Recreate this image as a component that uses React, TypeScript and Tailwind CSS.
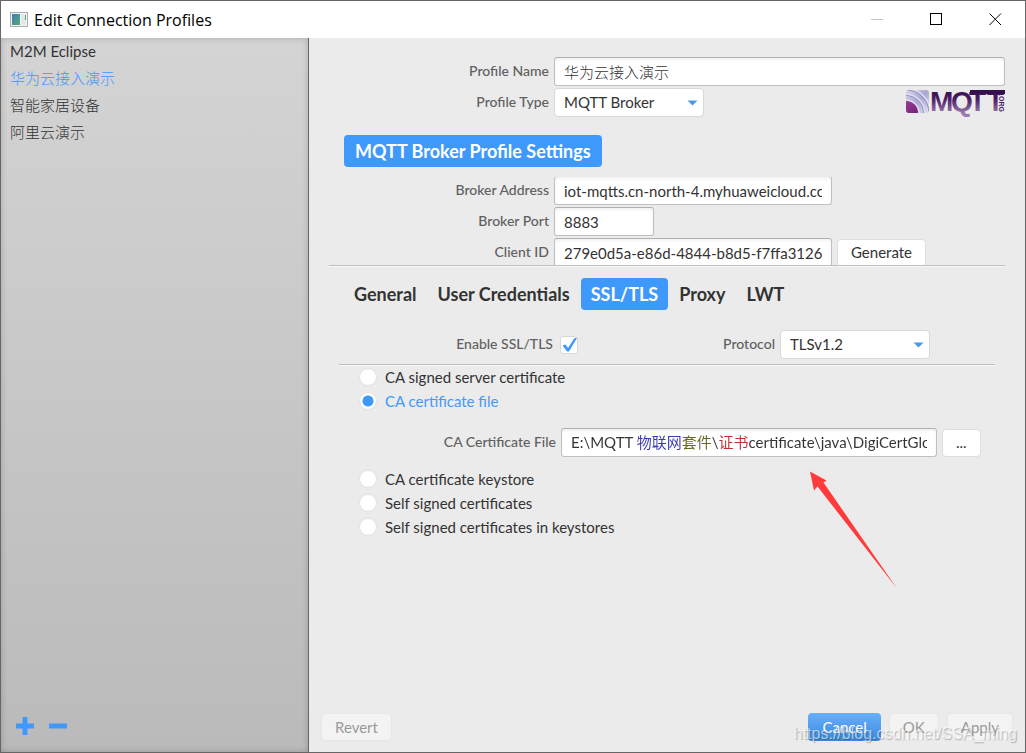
import type { ReactNode } from "react";

const fieldClass =
  "h-[29px] rounded-[3px] border border-[#c0c0c0] border-t-[#b0b0b0] bg-white px-[9px] text-[15px] text-[#333] shadow-[inset_0_2px_3px_rgba(0,0,0,0.06)] outline-none";
const labelClass = "pb-0.5 text-right text-sm font-medium text-[#606060]";
const buttonClass =
  "h-7 rounded-[4px] border border-[#dedede] bg-white px-[13px] text-[15px] text-[#333]";
const disabledClass =
  "h-7 rounded-[4px] border border-[#e6e6e6] bg-[#f3f3f3] px-[13px] text-[15px] text-[#9a9a9a]";

const profiles = ["M2M Eclipse", "华为云接入演示", "智能家居设备", "阿里云演示"];
const tabs = ["General", "User Credentials", "SSL/TLS", "Proxy", "LWT"];

function Field({ id, label, children }: { id: string; label: string; children: ReactNode }) {
  return (
    <div className="flex items-center gap-[5px]">
      <label htmlFor={id} className={`${labelClass} w-[220px] shrink-0`}>
        {label}
      </label>
      {children}
    </div>
  );
}

function Dropdown({ id, value }: { id: string; value: string }) {
  return (
    <div className="relative w-[150px]">
      <select
        id={id}
        className="h-[29px] w-full appearance-none rounded-[4px] border border-[#d8d8d8] bg-white px-[9px] text-[15px] text-[#333] outline-none"
      >
        <option>{value}</option>
      </select>
      <svg className="pointer-events-none absolute top-3 right-1.5" width="11" height="6" viewBox="0 0 11 6">
        <path d="M0.5 0.5H10.5L5.5 5.5Z" fill="#4a98e8" />
      </svg>
    </div>
  );
}

function Divider() {
  return <hr className="border-t border-t-[#bfbfbf] shadow-[0_1px_0_#f8f8f8]" />;
}

function CertOption({ label, checked = false }: { label: string; checked?: boolean }) {
  return (
    <label className={`flex h-6 items-center gap-2 text-[15px] ${checked ? "text-[#3f99fa]" : "text-[#333]"}`}>
      <input
        type="radio"
        name="certificate"
        defaultChecked={checked}
        className="size-[18px] appearance-none rounded-full border border-[#e2e2e2] bg-white bg-[radial-gradient(circle,#3f99fa_5px,transparent_6px)] not-checked:bg-none"
      />
      {label}
    </label>
  );
}

function MqttLogo() {
  return (
    <svg width="100" height="26" viewBox="0 0 100 26" role="img" aria-label="MQTT.ORG" className="overflow-visible">
      <defs>
        <linearGradient id="ink" gradientUnits="userSpaceOnUse" x1="0" y1="2" x2="0" y2="25">
          <stop offset="0" stopColor="#35104c" />
          <stop offset="0.4" stopColor="#4a1d63" />
          <stop offset="1" stopColor="#9a7bae" />
        </linearGradient>
        <linearGradient id="tile" x1="0" y1="0" x2="1" y2="1">
          <stop offset="0" stopColor="#d9d9ec" />
          <stop offset="0.5" stopColor="#a9a8d2" />
          <stop offset="1" stopColor="#e2e0f0" />
        </linearGradient>
        <linearGradient id="core" x1="0" y1="0" x2="1" y2="1">
          <stop offset="0" stopColor="#a84a9c" />
          <stop offset="1" stopColor="#64146c" />
        </linearGradient>
        <clipPath id="tileClip">
          <rect x="1" y="2" width="23" height="23" rx="3" />
        </clipPath>
      </defs>
      <g clipPath="url(#tileClip)">
        <rect x="1" y="2" width="23" height="23" fill="url(#tile)" />
        <g fill="none" stroke="#8f8dc4" strokeWidth="1">
          <circle cx="1" cy="25" r="17.5" />
          <circle cx="1" cy="25" r="23" />
        </g>
        <g fill="none" stroke="#dedef0" strokeWidth="1.5">
          <circle cx="1" cy="25" r="13" />
          <circle cx="1" cy="25" r="18.8" />
          <circle cx="1" cy="25" r="24.5" />
        </g>
        <circle cx="1" cy="25" r="12" fill="url(#core)" />
      </g>
      <text
        y="23"
        x="25 46 64 82"
        fill="url(#ink)"
        fontFamily="Liberation Sans, sans-serif"
        fontWeight="bold"
        fontSize="28"
      >
        MQTT
      </text>
      <rect x="65" y="2" width="35" height="4" fill="#35104c" />
      <text
        transform="translate(94 6) rotate(90)"
        fill="#4a1d63"
        fontFamily="Liberation Sans, sans-serif"
        fontWeight="bold"
        fontSize="7"
      >
        .ORG
      </text>
    </svg>
  );
}

export default function App() {
  return (
    <div className="relative flex min-h-screen flex-col border border-[#666] bg-[#ebebeb] font-['Lato','Noto_Sans_CJK_SC',sans-serif] text-[#333]">
      <header className="flex h-[37px] shrink-0 items-center bg-white pr-[23px] pl-[9px]">
        <svg width="18" height="15" viewBox="0 0 18 15" className="shrink-0">
          <defs>
            <linearGradient id="appIcon" x1="0" y1="0" x2="1" y2="1">
              <stop offset="0" stopColor="#3f7fae" />
              <stop offset="1" stopColor="#56a878" />
            </linearGradient>
          </defs>
          <rect x="0.5" y="0.5" width="17" height="14" fill="#f4f4f4" stroke="#a9adb3" />
          <rect x="2" y="2" width="8" height="11" fill="url(#appIcon)" />
          <rect x="11" y="2" width="5" height="11" fill="#e4e6e8" />
          <rect x="15" y="3" width="1" height="5" fill="#56a878" />
        </svg>
        <h1 className="ml-1.5 flex-1 font-['Open_Sans',sans-serif] text-base text-black">Edit Connection Profiles</h1>
        <div className="flex items-center gap-[46px]">
          <button aria-label="Minimize" disabled>
            <svg width="13" height="13" viewBox="0 0 13 13">
              <path d="M0 6.5H12" stroke="#c4c4c4" />
            </svg>
          </button>
          <button aria-label="Maximize">
            <svg width="13" height="13" viewBox="0 0 13 13">
              <rect x="0.5" y="0.5" width="11" height="11" fill="none" stroke="#000" />
            </svg>
          </button>
          <button aria-label="Close">
            <svg width="13" height="13" viewBox="0 0 13 13">
              <path d="M0.5 0.5L12 12M12 0.5L0.5 12" stroke="#000" />
            </svg>
          </button>
        </div>
      </header>

      <div className="flex flex-1">
        <aside className="flex w-[308px] shrink-0 flex-col border-r border-[#666] bg-linear-to-b from-[#d4d4d4] to-[#bababa] shadow-[inset_0_0_6px_rgba(0,0,0,0.2)]">
          <ul className="flex-1">
            {profiles.map((name, i) => (
              <li
                key={name}
                className={`flex h-[27px] items-center px-[9px] text-[15px] ${i === 0 ? "" : "font-light"} ${i === 1 ? "text-[#3f99fa]" : ""}`}
              >
                {name}
              </li>
            ))}
          </ul>
          <div className="flex gap-[15px] px-[15px] pb-[17px]">
            <button aria-label="Add profile">
              <svg width="18" height="18" viewBox="0 0 18 18">
                <path d="M9 0V18M0 9H18" stroke="#3f99fa" strokeWidth="5" />
              </svg>
            </button>
            <button aria-label="Remove profile">
              <svg width="18" height="18" viewBox="0 0 18 18">
                <path d="M0 9H18" stroke="#3f99fa" strokeWidth="5" />
              </svg>
            </button>
          </div>
        </aside>

        <main className="flex min-w-0 flex-1 flex-col">
          <div className="flex-1 px-5 pt-[19px]">
            <div className="flex flex-col gap-0.5">
              <Field id="name" label="Profile Name">
                <input id="name" defaultValue="华为云接入演示" className={`${fieldClass} min-w-0 flex-1 font-light`} />
              </Field>
              <div className="flex items-start justify-between">
                <Field id="type" label="Profile Type">
                  <Dropdown id="type" value="MQTT Broker" />
                </Field>
                <MqttLogo />
              </div>
            </div>

            <button className="mt-[18px] ml-[15px] h-8 rounded-[4px] bg-[#3f99fa] px-[11px] text-lg font-bold text-white">
              MQTT Broker Profile Settings
            </button>

            <div className="mt-2.5 h-[88px] overflow-hidden">
              <div className="-mt-px flex flex-col gap-0.5">
                <Field id="address" label="Broker Address">
                  <input
                    id="address"
                    defaultValue="iot-mqtts.cn-north-4.myhuaweicloud.com"
                    className={`${fieldClass} w-[278px]`}
                  />
                </Field>
                <Field id="port" label="Broker Port">
                  <input id="port" defaultValue="8883" className={`${fieldClass} w-[100px]`} />
                </Field>
                <Field id="client" label="Client ID">
                  <input
                    id="client"
                    defaultValue="279e0d5a-e86d-4844-b8d5-f7ffa3126"
                    className={`${fieldClass} w-[278px]`}
                  />
                  <button className={buttonClass}>Generate</button>
                </Field>
              </div>
            </div>
            <Divider />

            <div role="tablist" className="mt-3 flex gap-px pl-[15px]">
              {tabs.map((tab) => (
                <button
                  key={tab}
                  role="tab"
                  aria-selected={tab === "SSL/TLS"}
                  className="h-8 rounded-[4px] px-2.5 text-lg font-bold text-[#333] aria-selected:bg-[#3f99fa] aria-selected:text-white"
                >
                  {tab}
                </button>
              ))}
            </div>

            <section className="px-2.5">
              <div className="mt-5 flex items-center">
                <label htmlFor="ssl" className={`${labelClass} w-[214px]`}>
                  Enable SSL/TLS
                </label>
                <span className="relative ml-[7px] flex">
                  <input
                    id="ssl"
                    type="checkbox"
                    defaultChecked
                    className="size-[18px] appearance-none rounded-[3px] border border-[#d8d8d8] bg-white"
                  />
                  <svg className="pointer-events-none absolute top-0 left-0" width="18" height="18" viewBox="0 0 18 18">
                    <path d="M2.5 9.5L5.5 8.5L8 12L14.5 2H17L9 15.5H7Z" fill="#3f99fa" />
                  </svg>
                </span>
                <label htmlFor="protocol" className={`${labelClass} mr-[5px] w-[197px]`}>
                  Protocol
                </label>
                <Dropdown id="protocol" value="TLSv1.2" />
              </div>
              <div className="mt-[5px]">
                <Divider />
              </div>
              <div className="pl-5">
                <CertOption label="CA signed server certificate" />
                <CertOption label="CA certificate file" checked />
                <div className="mt-[15px] mb-2.5 flex items-center gap-[5px]">
                  <label htmlFor="cert" className={`${labelClass} w-[197px]`}>
                    CA Certificate File
                  </label>
                  <div className={`${fieldClass} flex w-[376px]`}>
                    <input
                      id="cert"
                      defaultValue="E:\MQTT 物联网套件\证书certificate\java\DigiCertGlobalRootCA.jks"
                      className="min-w-0 flex-1 bg-[linear-gradient(90deg,#333_66px,#3a3ab0_66px,#3a3ab0_111px,#66661a_111px,#66661a_141px,#333_141px,#333_148px,#c03030_148px,#c03030_177px,#333_177px)] bg-clip-text text-transparent outline-none"
                    />
                  </div>
                  <button className={buttonClass}>...</button>
                </div>
                <CertOption label="CA certificate keystore" />
                <CertOption label="Self signed certificates" />
                <CertOption label="Self signed certificates in keystores" />
              </div>
            </section>
          </div>

          <footer className="flex items-center gap-2 px-3 pb-[11px]">
            <button disabled className={disabledClass}>
              Revert
            </button>
            <span className="flex-1" />
            <button className="h-7 rounded-[4px] bg-linear-to-b from-[#69b0fb] to-[#3a87dc] px-3.5 text-[15px] text-white">
              Cancel
            </button>
            <button disabled className={disabledClass}>
              OK
            </button>
            <button disabled className={disabledClass}>
              Apply
            </button>
          </footer>
        </main>
      </div>

      <svg
        className="pointer-events-none absolute top-[470px] left-[809px]"
        width="88"
        height="118"
        viewBox="0 0 88 118"
        aria-hidden="true"
      >
        <path d="M0 0.5L16.500 9.500L13.5 11.500L87 117.500L7.500 15.500L4 19.500Z" fill="#ff3b3b" />
      </svg>
      <p className="pointer-events-none absolute right-2 bottom-1.5 font-['Liberation_Sans',sans-serif] text-base text-white/60 [text-shadow:1px_1px_1px_rgba(0,0,0,0.25)]">
        https://blog.csdn.net/SSA_ming
      </p>
    </div>
  );
}
